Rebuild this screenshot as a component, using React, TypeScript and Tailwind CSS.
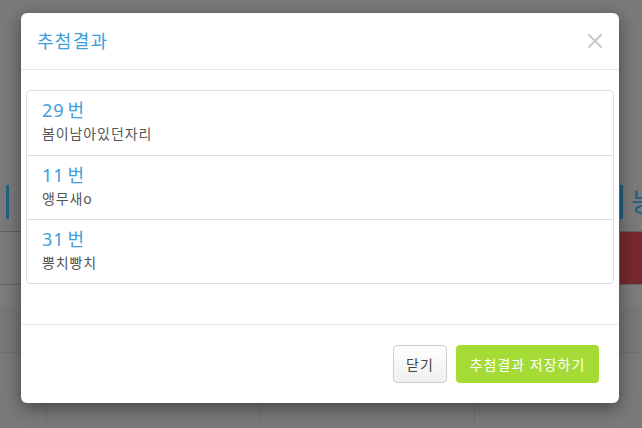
import { X } from 'lucide-react'

const winners = [
  { no: 29, name: '봄이남아있던자리' },
  { no: 11, name: '앵무새o' },
  { no: 31, name: '뽕치빵치' },
]

const font = "font-['Noto_Sans','Noto_Sans_CJK_KR',sans-serif]"

// dimmed page that sits under the modal backdrop
const Backdrop = () => (
  <div className="flex h-[428px] w-[642px] flex-col bg-[#7a7a7a]">
    <div className="flex h-[231px] items-end justify-between pb-[12px]">
      <div className="ml-[6px] h-[34px] w-[3px] bg-[#245f80]" />
      <div className="flex items-center gap-[8px]">
        <div className="h-[34px] w-[3px] bg-[#245f80]" />
        <span className="w-[11px] overflow-hidden text-[26px] leading-[34px] text-[#245f80]">능</span>
      </div>
    </div>
    <div className="h-px bg-[#616161]" />
    <div className="flex h-[52px] justify-end">
      <div className="w-[22px] bg-[#772a2e]" />
    </div>
    <div className="h-px bg-[#666]" />
    <div className="h-[21px] bg-[#7c7c7c]" />
    <div className="h-[47px] border-b border-[#707070] bg-[#787878]" />
    <div className="flex h-[75px]">
      <div className="w-[47px] border-r border-[#717171]" />
      <div className="w-[213px] border-r border-[#717171]" />
      <div className="w-[215px] border-r border-[#717171]" />
      <div className="flex-1" />
    </div>
  </div>
)

export default function App() {
  return (
    <div className={`relative h-[428px] w-[642px] overflow-hidden ${font}`}>
      <Backdrop />
      <div className="absolute left-[21px] top-[13px] w-[598px] rounded-[6px] bg-white shadow-[0_5px_18px_rgba(0,0,0,0.45)]">
        <div className="flex h-[57px] items-center justify-between border-b border-[#e5e5e5] pl-[16px] pr-[12px]">
          <h4 className="text-[18px] font-normal leading-[25px] tracking-[1.3px] text-[#3d9fdb]">추첨결과</h4>
          <X size={24} strokeWidth={2} className="text-[#c8c8c8]" />
        </div>

        <div className="px-[5px] pb-[40px] pt-[20px]">
          <ul className="rounded-[4px] border border-[#dddddd]">
            {winners.map((w, i) => (
              <li
                key={w.no}
                className={`h-[64px] px-[15px] pt-[9px] ${i > 0 ? 'border-t border-[#dddddd]' : ''}`}
              >
                <div className="mb-[4px] text-[18px] leading-[20px] tracking-[1px] text-[#3d9fdb]">
                  {w.no}<span className="ml-[3px]">번</span>
                </div>
                <div className="text-[14px] leading-[20px] tracking-[0.9px] text-[#555555]">{w.name}</div>
              </li>
            ))}
          </ul>
        </div>

        <div className="flex justify-end gap-[9px] border-t border-[#e5e5e5] px-[20px] pb-[20px] pt-[20px]">
          <button className="h-[38px] w-[54px] rounded-[4px] border border-[#cccccc] bg-gradient-to-b from-white to-[#efefef] text-[14px] tracking-[1px] text-[#444]">
            닫기
          </button>
          <button className="h-[38px] w-[143px] rounded-[4px] bg-[#a4db37] text-[14px] tracking-[1px] text-white">
            추첨결과 저장하기
          </button>
        </div>
      </div>
    </div>
  )
}
